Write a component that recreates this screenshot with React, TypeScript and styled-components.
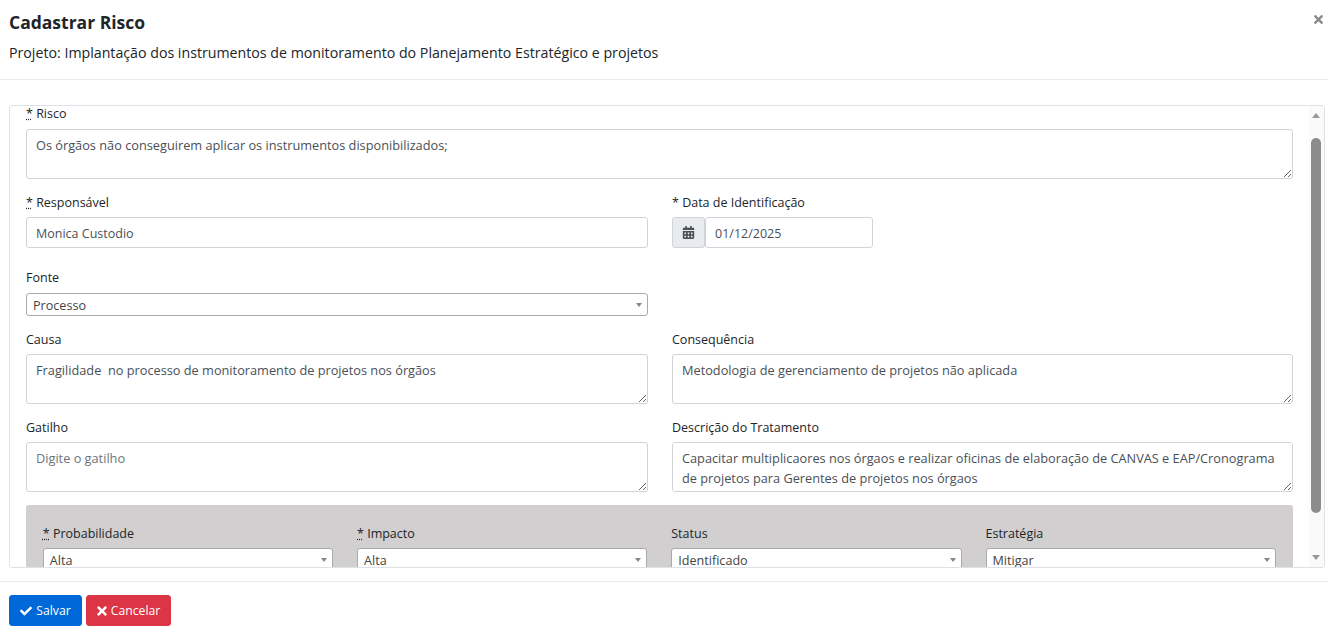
import styled, { createGlobalStyle } from 'styled-components';
import { FaCalendarAlt, FaCheck, FaTimes } from 'react-icons/fa';

const GlobalStyle = createGlobalStyle`
  html, body {
    margin: 0;
    padding: 0;
    background: #fff;
  }
  * {
    box-sizing: border-box;
  }
`;

const Modal = styled.div`
  width: 1328px;
  height: 634px;
  overflow: hidden;
  display: flex;
  flex-direction: column;
  font-family: 'Open Sans', 'Noto Sans', sans-serif;
  font-size: 12.6px;
  color: #212529;
`;

const Header = styled.header`
  position: relative;
  height: 80px;
  padding: 11px 9px 0;
  border-bottom: 1px solid #e9ecef;
`;

const Title = styled.h4`
  margin: 0;
  font-size: 17.5px;
  line-height: 22px;
  font-weight: 700;
`;

const Subtitle = styled.p`
  margin: 10px 0 0;
  font-size: 14.2px;
  line-height: 20px;
`;

const Close = styled.span`
  position: absolute;
  top: 13px;
  right: 3px;
  display: flex;
  color: #8a8a8a;
  font-size: 13px;
`;

const Body = styled.div`
  height: 502px;
  padding: 25px 3px 14px 9px;
  border-bottom: 1px solid #e9ecef;
`;

const ScrollBox = styled.div`
  height: 463px;
  display: flex;
  border: 1px solid #dee2e6;
  border-radius: 3px;
  overflow: hidden;
`;

const Content = styled.div`
  flex: 1;
  min-width: 0;
  padding: 0 16px;
  overflow: hidden;
`;

const Row = styled.div`
  display: grid;
  grid-template-columns: 622px 621px;
  column-gap: 24px;
`;

const Field = styled.div<{ $mb?: number }>`
  display: flex;
  flex-direction: column;
  margin-bottom: ${({ $mb }) => $mb ?? 15}px;
`;

const Label = styled.label<{ $tight?: boolean }>`
  height: 16px;
  margin-bottom: 7px;
  font-size: 12.5px;
  line-height: ${({ $tight }) => ($tight ? 15 : 17)}px;
  white-space: nowrap;
`;

const Required = styled.abbr`
  text-decoration: underline dotted;
  cursor: help;
`;

const Area = styled.textarea`
  height: 50px;
  padding: 5px 9px;
  border: 1px solid #ced4da;
  border-radius: 3px;
  font-family: inherit;
  font-size: 12.75px;
  line-height: 20px;
  color: #495057;
  resize: vertical;
  outline: none;
  &::placeholder {
    color: #6c757d;
    opacity: 1;
  }
`;

const Input = styled.input`
  height: 31px;
  width: 100%;
  padding: 1px 9px 0;
  border: 1px solid #ced4da;
  border-radius: 3px;
  font-family: inherit;
  font-size: 12.5px;
  color: #495057;
  outline: none;
`;

const DateGroup = styled.div`
  display: flex;
  width: 201px;
`;

const DateAddon = styled.span`
  flex: 0 0 33px;
  height: 31px;
  display: flex;
  align-items: center;
  justify-content: center;
  background: #e9ecef;
  border: 1px solid #ced4da;
  border-radius: 3px;
  color: #495057;
  font-size: 13px;
`;

const Select = styled.div`
  height: 23px;
  display: flex;
  align-items: center;
  justify-content: space-between;
  padding: 1px 5px 0 6px;
  background: #fff;
  border: 1px solid #aaa;
  border-radius: 3px;
  font-size: 12.6px;
  color: #444;
  &::after {
    content: '';
    border-top: 4px solid #888;
    border-left: 3px solid transparent;
    border-right: 3px solid transparent;
  }
`;

const GrayPanel = styled.div`
  margin-top: -2px;
  padding: 20px 17px 20px 16.75px;
  background: #d1cfd0;
  border-radius: 3px;
  display: grid;
  grid-template-columns: repeat(4, 290.25px);
  column-gap: 24px;
`;

const Track = styled.div`
  flex: 0 0 15px;
  position: relative;
  background: #fafafa;
`;

const Arrow = styled.span<{ $down?: boolean }>`
  position: absolute;
  left: 3px;
  ${({ $down }) => ($down ? 'bottom: 7px;' : 'top: 7px;')}
  border-left: 4px solid transparent;
  border-right: 4px solid transparent;
  ${({ $down }) => ($down ? 'border-top' : 'border-bottom')}: 5px solid #999;
`;

const Thumb = styled.div`
  position: absolute;
  top: 32px;
  left: 2px;
  width: 10px;
  height: 375px;
  background: #8c8c8c;
  border-radius: 5px;
`;

const Footer = styled.footer`
  padding: 13px 9px 0;
  display: flex;
  gap: 4px;
`;

const Button = styled.button<{ $color: string; $width: number }>`
  width: ${({ $width }) => $width}px;
  height: 31px;
  padding: 0;
  display: flex;
  align-items: center;
  justify-content: center;
  gap: 4px;
  background: ${({ $color }) => $color};
  border: 1px solid ${({ $color }) => $color};
  border-radius: 3px;
  color: #fff;
  font-family: inherit;
  font-size: 12.2px;
`;

const CancelIcon = styled(FaTimes)`
  margin: 0 -2px;
`;

const Star = () => <Required title="obrigatório">*</Required>;

const panelFields = [
  { label: 'Probabilidade', value: 'Alta', required: true },
  { label: 'Impacto', value: 'Alta', required: true },
  { label: 'Status', value: 'Identificado', required: false },
  { label: 'Estratégia', value: 'Mitigar', required: false },
];

const App = () => (
  <Modal>
    <GlobalStyle />
    <Header>
      <Title>Cadastrar Risco</Title>
      <Subtitle>Projeto: Implantação dos instrumentos de monitoramento do Planejamento Estratégico e projetos</Subtitle>
      <Close>
        <FaTimes />
      </Close>
    </Header>
    <Body>
      <ScrollBox>
        <Content>
          <Field>
            <Label $tight>
              <Star /> Risco
            </Label>
            <Area readOnly defaultValue="Os órgãos não conseguirem aplicar os instrumentos disponibilizados;" />
          </Field>
          <Row>
            <Field $mb={22}>
              <Label>
                <Star /> Responsável
              </Label>
              <Input readOnly defaultValue="Monica Custodio" />
            </Field>
            <Field $mb={22}>
              <Label>* Data de Identificação</Label>
              <DateGroup>
                <DateAddon>
                  <FaCalendarAlt />
                </DateAddon>
                <Input readOnly defaultValue="01/12/2025" />
              </DateGroup>
            </Field>
          </Row>
          <Row>
            <Field>
              <Label $tight>Fonte</Label>
              <Select>Processo</Select>
            </Field>
          </Row>
          <Row>
            <Field>
              <Label>Causa</Label>
              <Area readOnly defaultValue="Fragilidade  no processo de monitoramento de projetos nos órgãos" />
            </Field>
            <Field>
              <Label>Consequência</Label>
              <Area readOnly defaultValue="Metodologia de gerenciamento de projetos não aplicada" />
            </Field>
          </Row>
          <Row>
            <Field>
              <Label>Gatilho</Label>
              <Area readOnly placeholder="Digite o gatilho" />
            </Field>
            <Field>
              <Label>Descrição do Tratamento</Label>
              <Area
                readOnly
                defaultValue="Capacitar multiplicaores nos órgaos e realizar oficinas de elaboração de CANVAS e EAP/Cronograma de projetos para Gerentes de projetos nos órgaos"
              />
            </Field>
          </Row>
          <GrayPanel>
            {panelFields.map((f) => (
              <Field key={f.label} $mb={0}>
                <Label>
                  {f.required && <Star />}
                  {f.required && ' '}
                  {f.label}
                </Label>
                <Select>{f.value}</Select>
              </Field>
            ))}
          </GrayPanel>
        </Content>
        <Track>
          <Arrow />
          <Thumb />
          <Arrow $down />
        </Track>
      </ScrollBox>
    </Body>
    <Footer>
      <Button $color="#0069d9" $width={73}>
        <FaCheck size={12} /> Salvar
      </Button>
      <Button $color="#dc3545" $width={85}>
        <CancelIcon size={14} /> Cancelar
      </Button>
    </Footer>
  </Modal>
);

export default App;
